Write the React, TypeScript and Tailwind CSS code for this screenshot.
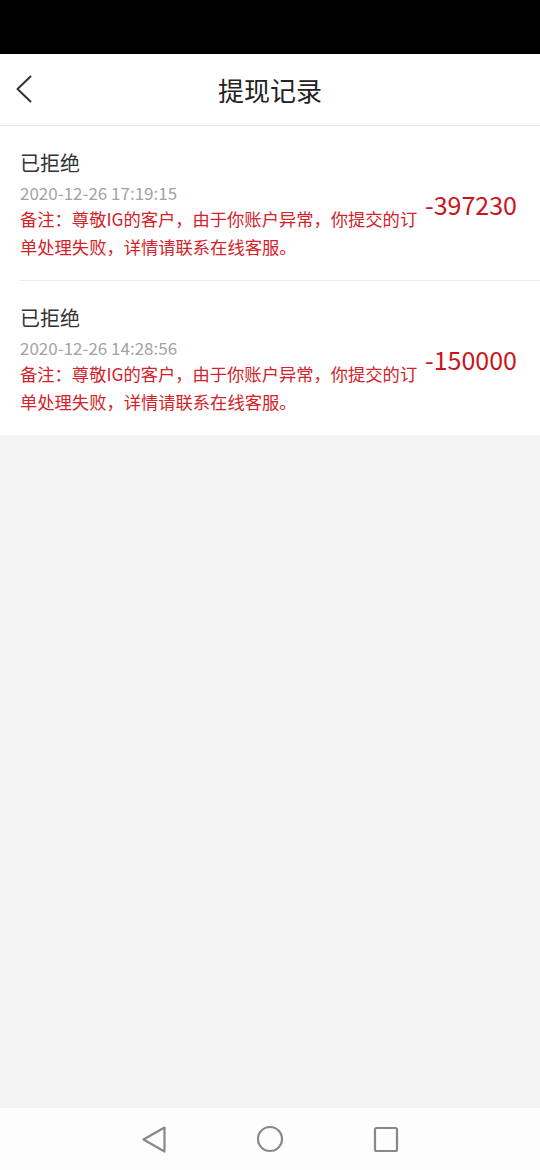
import React from "react";

interface Record {
  id: number;
  status: string;
  time: string;
  remark: string;
  amount: string;
}

const records: Record[] = [
  {
    id: 1,
    status: "已拒绝",
    time: "2020-12-26 17:19:15",
    remark: "备注：尊敬IG的客户，由于你账户异常，你提交的订单处理失败，详情请联系在线客服。",
    amount: "-397230",
  },
  {
    id: 2,
    status: "已拒绝",
    time: "2020-12-26 14:28:56",
    remark: "备注：尊敬IG的客户，由于你账户异常，你提交的订单处理失败，详情请联系在线客服。",
    amount: "-150000",
  },
];

const font = "font-['Noto_Sans_CJK_SC','Noto_Sans',sans-serif]";

const App: React.FC = () => {
  return (
    <div className={`flex h-[1170px] w-[540px] flex-col bg-[#f4f4f4] ${font}`}>
      {/* status bar */}
      <div className="h-[54px] shrink-0 bg-black" />

      {/* header */}
      <header className="relative flex h-[72px] shrink-0 items-center justify-center border-b border-[#e8e8e8] bg-white">
        <button className="absolute left-[16px] top-[21px]">
          <svg width="16" height="28" viewBox="0 0 16 28" fill="none">
            <path d="M14.5 1.5 L1.5 14 L14.5 26.5" stroke="#333" strokeWidth="2" strokeLinecap="round" strokeLinejoin="round" />
          </svg>
        </button>
        <h1 className="text-[26px] leading-none text-[#222]">提现记录</h1>
      </header>

      {/* records */}
      <div className="bg-white">
        {records.map((r, i) => (
          <div key={r.id} className="pl-5">
            <div
              className={`flex items-center pr-[23px] pt-[23px] pb-[19px] ${
                i < records.length - 1 ? "border-b border-[#ececec]" : ""
              }`}
            >
              <div className="w-[402px] shrink-0">
                <div className="text-[20px] leading-[28px] text-[#333]">{r.status}</div>
                <div className="mt-[3px] text-[17px] leading-[25px] text-[#a3a3a3]">{r.time}</div>
                <div className="text-[17.3px] leading-[28px] text-[#d2232a]">{r.remark}</div>
              </div>
              <div className="flex-1 pb-[2px] text-right text-[25px] leading-none text-[#c8161d]">{r.amount}</div>
            </div>
          </div>
        ))}
      </div>

      <div className="flex-1" />

      {/* nav bar */}
      <nav className="flex h-[62px] shrink-0 items-center justify-center gap-[88px] bg-[#fdfdfd]">
        <svg width="28" height="28" viewBox="0 0 28 28" fill="none">
          <path d="M24.5 2.5 L3.5 14.5 L24.5 26.5 Z" stroke="#888" strokeWidth="2.2" strokeLinejoin="round" />
        </svg>
        <svg width="28" height="28" viewBox="0 0 28 28" fill="none">
          <circle cx="14" cy="14" r="12" stroke="#888" strokeWidth="2.2" />
        </svg>
        <svg width="28" height="28" viewBox="0 0 28 28" fill="none">
          <rect x="3" y="3" width="22" height="23" rx="1.5" stroke="#888" strokeWidth="2.2" />
        </svg>
      </nav>
    </div>
  );
};

export default App;
